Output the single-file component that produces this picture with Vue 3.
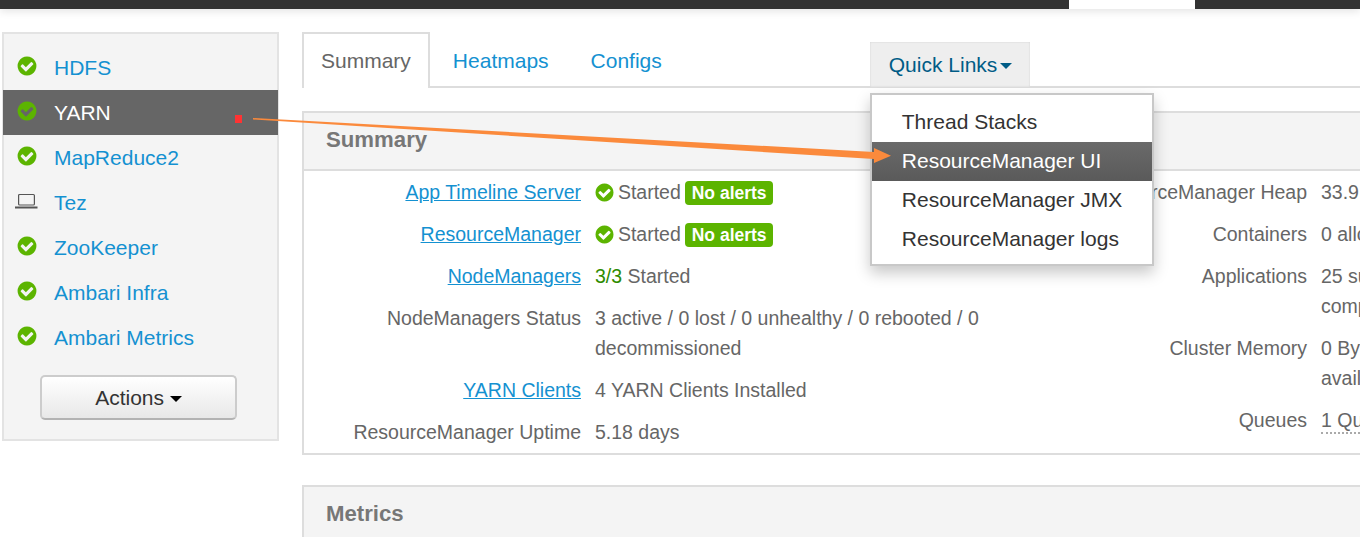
<template>
  <div class="page">
    <div class="topbar">
      <div class="topbar-dark topbar-left"></div>
      <div class="topbar-gap"></div>
      <div class="topbar-dark"></div>
    </div>

    <div class="content">
      <!-- Services -->
      <aside class="sidebar">
        <ul class="services">
          <li
            v-for="s in services"
            :key="s.name"
            class="service"
            :class="{ active: s.name === 'YARN' }"
          >
            <span class="service-icon">
              <svg v-if="s.client" class="laptop" viewBox="0 0 24 16" width="24" height="16">
                <rect x="3.6" y="1.5" width="15.8" height="10.5" rx="1" fill="none" stroke="#555" stroke-width="1.2" />
                <path d="M0 13.5h22.5v2H0z" fill="#555" />
              </svg>
              <svg v-else class="check" viewBox="0 0 1792 1792" width="22" height="22">
                <path fill="#5cb400" :d="checkPath" />
              </svg>
            </span>
            <a class="service-name">{{ s.name }}</a>
          </li>
        </ul>
        <button class="actions-btn">Actions <span class="caret"></span></button>
      </aside>

      <main class="main">
        <div class="tabs">
          <a class="tab current">Summary</a>
          <a class="tab">Heatmaps</a>
          <a class="tab">Configs</a>
          <div class="quick-links">
            Quick Links<span class="caret caret-blue"></span>
            <ul class="quick-menu">
              <li v-for="q in quickLinks" :key="q" :class="{ hover: q === 'ResourceManager UI' }">{{ q }}</li>
            </ul>
          </div>
        </div>

        <section class="panel summary">
          <h3 class="panel-title">Summary</h3>
          <div class="summary-body">
            <div class="summary-col">
              <div class="row">
                <div class="label"><a>App Timeline Server</a></div>
                <div class="value">
                  <svg class="check-small" viewBox="0 0 1792 1792" width="21" height="21"><path fill="#5cb400" :d="checkPath" /></svg>
                  Started <span class="badge">No alerts</span>
                </div>
              </div>
              <div class="row">
                <div class="label"><a>ResourceManager</a></div>
                <div class="value">
                  <svg class="check-small" viewBox="0 0 1792 1792" width="21" height="21"><path fill="#5cb400" :d="checkPath" /></svg>
                  Started <span class="badge">No alerts</span>
                </div>
              </div>
              <div class="row">
                <div class="label"><a>NodeManagers</a></div>
                <div class="value"><span class="green">3/3</span> Started</div>
              </div>
              <div class="row">
                <div class="label">NodeManagers Status</div>
                <div class="value">3 active / 0 lost / 0 unhealthy / 0 rebooted / 0 decommissioned</div>
              </div>
              <div class="row">
                <div class="label"><a>YARN Clients</a></div>
                <div class="value">4 YARN Clients Installed</div>
              </div>
              <div class="row">
                <div class="label">ResourceManager Uptime</div>
                <div class="value">5.18 days</div>
              </div>
            </div>
            <div class="summary-col">
              <div v-for="r in rightRows" :key="r.label" class="row">
                <div class="label">{{ r.label }}</div>
                <div class="value"><span :class="{ dotted: r.dotted }">{{ r.value }}</span></div>
              </div>
            </div>
          </div>
        </section>

        <section class="panel metrics">
          <h3 class="panel-title">Metrics</h3>
        </section>
      </main>
    </div>

    <!-- annotation drawn on top of the screenshot -->
    <div class="red-dot"></div>
    <svg class="arrow" viewBox="0 0 1360 537" width="1360" height="537">
      <polygon fill="#fb8a3c" points="253,118 874,152 874,148 891,155.7 874,163 874,159 253,119.5" />
    </svg>
  </div>
</template>

<script setup>
const checkPath =
  'M1412 734q0-28-18-46l-91-90q-19-19-45-19t-45 19l-408 407-226-226q-19-19-45-19t-45 19l-91 90q-18 18-18 46 0 27 18 45l362 362q19 19 45 19 27 0 46-19l543-543q18-18 18-45zm252 162q0 209-103 385.5t-279.5 279.5-385.5 103-385.5-103-279.5-279.5-103-385.5 103-385.5 279.5-279.5 385.5-103 385.5 103 279.5 279.5 103 385.5z';

const services = [
  { name: 'HDFS' },
  { name: 'YARN' },
  { name: 'MapReduce2' },
  { name: 'Tez', client: true },
  { name: 'ZooKeeper' },
  { name: 'Ambari Infra' },
  { name: 'Ambari Metrics' },
];

const quickLinks = ['Thread Stacks', 'ResourceManager UI', 'ResourceManager JMX', 'ResourceManager logs'];

const rightRows = [
  { label: 'ResourceManager Heap', value: '33.9 MB / 910.5 MB (3.7% used)' },
  { label: 'Containers', value: '0 allocated / 0 pending / 0 reserved' },
  { label: 'Applications', value: '25 submitted / 0 running / 0 pending / 25 completed / 0 killed / 0 failed' },
  { label: 'Cluster Memory', value: '0 Bytes used / 0 Bytes reserved / 24 GB available' },
  { label: 'Queues', value: '1 Queue', dotted: true },
];
</script>

<style>
html,
body {
  margin: 0;
  background: #fff;
  overflow: hidden;
}
</style>

<style scoped>
.page {
  position: relative;
  width: 1360px;
  height: 537px;
  overflow: hidden;
  font-family: "Liberation Sans", Arial, sans-serif;
  font-size: 19.5px;
  line-height: 30px;
  color: #666;
}

.topbar {
  display: flex;
  height: 9px;
  box-shadow: 0 2px 8px rgba(0, 0, 0, 0.12);
}

.topbar-dark {
  flex: 1;
  background: #333;
}

.topbar-left {
  flex: none;
  width: 1069px;
}

.topbar-gap {
  width: 126px;
  background: #fff;
}

.content {
  display: flex;
  align-items: flex-start;
  padding: 23px 0 0 2px;
}

.sidebar {
  flex: none;
  box-sizing: border-box;
  width: 277px;
  height: 409px;
  margin-right: 23px;
  padding-top: 11px;
  font-size: 21px;
  background: #f4f4f4;
  border: 2px solid #e3e3e3;
}

.services {
  list-style: none;
  margin: 0;
  padding: 0;
}

.service {
  display: flex;
  height: 45px;
  align-items: center;
}

.service.active {
  margin: 0 -1px;
  padding: 0 1px;
  background: #666;
}

.service.active .service-name {
  color: #fff;
}

.service-icon {
  flex: none;
  display: flex;
  justify-content: center;
  width: 24px;
  margin-left: 11px;
  margin-right: 15px;
  transform: translateY(-2px);
}

.check,
.laptop {
  display: block;
}

.service-name {
  color: #1491d1;
}

.actions-btn {
  display: block;
  box-sizing: border-box;
  width: 197px;
  height: 45px;
  margin: 15px 0 0 36px;
  padding: 0;
  font: inherit;
  color: #333;
  background: linear-gradient(to bottom, #fff, #e8e8e8);
  border: 2px solid #ccc;
  border-bottom-color: #b3b3b3;
  border-radius: 5px;
}

.caret {
  display: inline-block;
  width: 0;
  height: 0;
  vertical-align: middle;
  border-top: 6px solid #000;
  border-left: 6px solid transparent;
  border-right: 6px solid transparent;
}

.caret-blue {
  border-top-color: #005c86;
  margin-left: 3px;
}

.main {
  flex: none;
  width: 1452px;
}

.tabs {
  display: flex;
  height: 56px;
  align-items: stretch;
  border-bottom: 2px solid #ddd;
  box-sizing: border-box;
  font-size: 21px;
}

.tab {
  box-sizing: border-box;
  height: 56px;
  padding: 12px 17px 0;
  margin-right: 4px;
  color: #1491d1;
  border: 2px solid transparent;
  border-bottom: none;
}

.tab.current {
  color: #666;
  background: #fff;
  border-color: #ddd;
}

.quick-links {
  position: relative;
  box-sizing: border-box;
  height: 45px;
  width: 160px;
  margin: 10px 0 0 185px;
  padding: 8px 0 0 19px;
  color: #005c86;
  background: #eee;
  box-shadow: inset 0 0 2px rgba(0, 0, 0, 0.14);
}

.quick-menu {
  position: absolute;
  z-index: 5;
  left: 0;
  top: 51px;
  box-sizing: border-box;
  width: 284px;
  height: 173px;
  margin: 0;
  padding: 8px 0 0;
  list-style: none;
  background: #fff;
  border: 2px solid #c8c8c8;
  box-shadow: 0 7px 14px rgba(0, 0, 0, 0.22);
}

.quick-menu li {
  height: 39px;
  padding-left: 30px;
  line-height: 37px;
  color: #333;
}

.quick-menu li.hover {
  color: #fff;
  background: linear-gradient(to bottom, #6a6a6a, #5a5a5a);
}

.panel {
  box-sizing: border-box;
  border: 2px solid #ddd;
  border-right: none;
}

.summary {
  margin-top: 23px;
  height: 344px;
}

.panel-title {
  box-sizing: border-box;
  height: 58px;
  margin: 0;
  padding: 12px 22px 0;
  font-size: 22.2px;
  font-weight: bold;
  color: #777;
  background: #f4f4f4;
  border-bottom: 2px solid #ddd;
}

.summary-body {
  display: grid;
  grid-template-columns: 726px 726px;
}

.row {
  display: flex;
  gap: 14px;
  padding: 6px 0;
}

.label {
  flex: none;
  width: 277px;
  text-align: right;
}

.label a {
  color: #1491d1;
  text-decoration: underline;
}

.value {
  width: 390px;
}

.check-small {
  margin: 0 -2px 0 -1.5px;
  vertical-align: -4px;
}

.badge {
  display: inline-block;
  height: 24px;
  margin-left: -1px;
  padding: 0 6.5px;
  font-size: 17.5px;
  font-weight: bold;
  line-height: 24px;
  color: #fff;
  background: #5cb400;
  border-radius: 4px;
}

.green {
  color: #2e8b00;
}

.dotted {
  padding-bottom: 1px;
  border-bottom: 2px dotted #aaa;
}

.metrics {
  margin-top: 30px;
}

.red-dot {
  position: absolute;
  left: 235px;
  top: 115px;
  width: 7px;
  height: 8px;
  background: #ff3333;
}

.arrow {
  position: absolute;
  left: 0;
  top: 0;
  z-index: 6;
  pointer-events: none;
}
</style>
